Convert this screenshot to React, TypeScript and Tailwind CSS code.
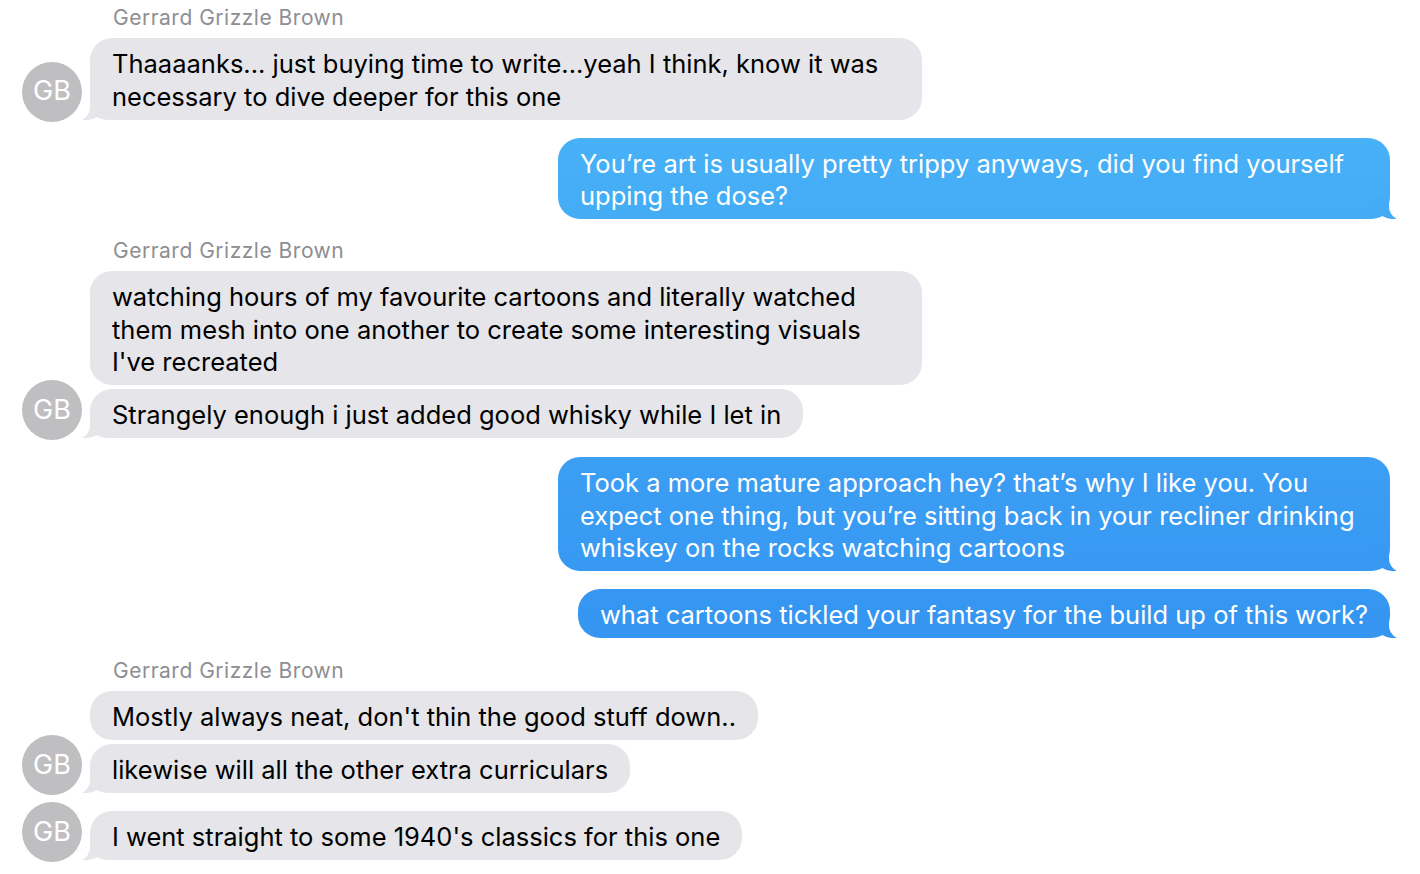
import React from "react";

type Line = string;

function Tail({ side, color }: { side: "left" | "right"; color: string }) {
  // iMessage style tail, drawn over the bubble's bottom corner
  if (side === "left") {
    return (
      <svg
        className="absolute bottom-0 left-[-8px] h-[22px] w-[28px]"
        viewBox="0 0 28 22"
      >
        <path
          d="M8,0 L8,9 C8,15 5,19.5 0,22 C6,22.6 11,21.2 14.5,19 C18,21 22,22 28,22 L28,0 Z"
          fill={color}
        />
      </svg>
    );
  }
  return (
    <svg
      className="absolute bottom-0 right-[-7px] h-[22px] w-[28px]"
      viewBox="0 0 28 22"
    >
      <path
        d="M20,0 L20,9 C20,15 23,19.5 28,22 C22,22.6 17,21.2 13.5,19 C10,21 6,22 0,22 L0,0 Z"
        fill={color}
      />
    </svg>
  );
}

function Bubble({
  from,
  lines,
  wide,
  tail,
  tailColor,
}: {
  from: "them" | "me";
  lines: Line[];
  wide?: boolean;
  tail?: boolean;
  tailColor?: string;
}) {
  const tone =
    from === "them"
      ? "bg-[#e5e5ea] text-black"
      : "bg-[linear-gradient(to_bottom,#4cb8f8,#2c88ef)] bg-fixed text-white";

  return (
    <div
      className={`relative rounded-[22px] px-[22px] pb-[6.5px] pt-[10px] text-[25.5px] leading-[32.5px] ${tone} ${
        wide ? "w-[832px]" : "w-fit"
      }`}
    >
      {tail && (
        <Tail
          side={from === "them" ? "left" : "right"}
          color={tailColor ?? "#e5e5ea"}
        />
      )}
      <div className="relative">
        {lines.map((l) => (
          <div key={l} className="whitespace-nowrap">
            {l}
          </div>
        ))}
      </div>
    </div>
  );
}

function Avatar() {
  // negative top margin so the avatar never makes the row taller than the bubbles
  return (
    <div className="-mt-[20px] flex h-[60px] w-[60px] translate-y-[2px] items-center justify-center rounded-full bg-[#bfbfc1] text-[27px] text-white">
      GB
    </div>
  );
}

function SenderName({ className = "" }: { className?: string }) {
  return (
    <div
      className={`pl-[113px] text-[21px] leading-[24px] tracking-[0.5px] text-[#8e8e93] ${className}`}
    >
      Gerrard Grizzle Brown
    </div>
  );
}

function Incoming({ children, className = "" }: { children: React.ReactNode; className?: string }) {
  return (
    <div className={`flex items-end pl-[22px] ${className}`}>
      <div className="mr-2 w-[60px] shrink-0">
        <Avatar />
      </div>
      <div className="flex flex-col items-start gap-1">{children}</div>
    </div>
  );
}

function Outgoing({ children, className = "" }: { children: React.ReactNode; className?: string }) {
  return <div className={`flex justify-end pr-[30px] ${className}`}>{children}</div>;
}

export default function App() {
  return (
    <div className="min-h-screen bg-white pt-[6px] [font-family:Inter,'Helvetica_Neue',Arial,sans-serif] antialiased">
      <SenderName />
      <Incoming className="mt-2">
        <Bubble
          from="them"
          wide
          tail
          lines={[
            "Thaaaanks... just buying time to write...yeah I think, know it was",
            "necessary to dive deeper for this one",
          ]}
        />
      </Incoming>

      <Outgoing className="mt-[18px]">
        <Bubble
          from="me"
          wide
          tail
          tailColor="#44acf6"
          lines={[
            "You’re art is usually pretty trippy anyways, did you find yourself",
            "upping the dose?",
          ]}
        />
      </Outgoing>

      <SenderName className="mt-[20px]" />
      <Incoming className="mt-2">
        <Bubble
          from="them"
          wide
          lines={[
            "watching hours of my favourite cartoons and literally watched",
            "them mesh into one another to create some interesting visuals",
            "I've recreated",
          ]}
        />
        <Bubble
          from="them"
          tail
          lines={["Strangely enough i just added good whisky while I let in"]}
        />
      </Incoming>

      <Outgoing className="mt-[19px]">
        <Bubble
          from="me"
          wide
          tail
          tailColor="#3799f2"
          lines={[
            "Took a more mature approach hey? that’s why I like you. You",
            "expect one thing, but you’re sitting back in your recliner drinking",
            "whiskey on the rocks watching cartoons",
          ]}
        />
      </Outgoing>

      <Outgoing className="mt-[18px]">
        <Bubble
          from="me"
          tail
          tailColor="#3595f1"
          lines={["what cartoons tickled your fantasy for the build up of this work?"]}
        />
      </Outgoing>

      <SenderName className="mt-[21px]" />
      <Incoming className="mt-2">
        <Bubble from="them" lines={["Mostly always neat, don't thin the good stuff down.."]} />
        <Bubble from="them" tail lines={["likewise will all the other extra curriculars"]} />
      </Incoming>

      <Incoming className="mt-[18px]">
        <Bubble from="them" tail lines={["I went straight to some 1940's classics for this one"]} />
      </Incoming>
    </div>
  );
}
